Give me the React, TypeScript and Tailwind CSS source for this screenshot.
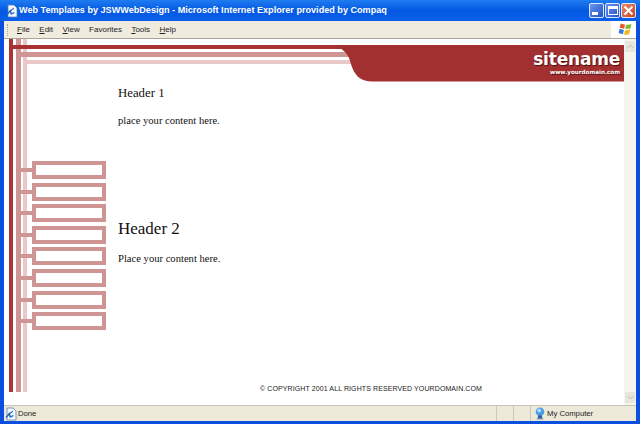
const menus = [
  { key: "F", rest: "ile" },
  { key: "E", rest: "dit" },
  { key: "V", rest: "iew" },
  { key: "", rest: "Favorites" },
  { key: "T", rest: "ools" },
  { key: "H", rest: "elp" },
];

const navItems = [0, 1, 2, 3, 4, 5, 6, 7];

function PageIcon() {
  return (
    <svg width="14" height="14" viewBox="0 0 14 14" className="shrink-0">
      <path d="M3 1h6l3 3v9H3z" fill="#f4f8ff" stroke="#5b7fb5" strokeWidth="0.8" />
      <path d="M9 3.5 4 7l2 4 4-2-1-1-2 1-1-2 3-2z" fill="#2f74c8" />
      <path d="M2 10.5 6 6" stroke="#1f5fb0" strokeWidth="1.2" />
    </svg>
  );
}

function WindowsFlag() {
  return (
    <svg width="15" height="15" viewBox="0 0 14 14">
      <path d="M2.5 1.5 6.6 2.6 5.7 6.4 1.6 5.4z" fill="#e8562a" />
      <path d="M7.6 2.8 12.6 2 11.6 6 6.8 6.6z" fill="#7cb82f" />
      <path d="M1.4 6.4 5.5 7.4 4.6 11.4 0.6 10.2z" fill="#2f7ce0" />
      <path d="M6.6 7.6 11.4 7 10.4 11.6 5.6 12z" fill="#f5b81c" />
    </svg>
  );
}

function ComputerIcon() {
  return (
    <svg width="12" height="15" viewBox="0 0 14 16" className="shrink-0">
      <circle cx="7" cy="6" r="5" fill="#4a9be8" />
      <circle cx="6" cy="4.5" r="2.2" fill="#b4dcfa" />
      <path d="M5 10h4l1 4H4z" fill="#2a5fa8" />
      <path d="M3 14h8v1H3z" fill="#8a97a8" />
    </svg>
  );
}

function WindowButton({ kind }: { kind: "min" | "max" | "close" }) {
  const bg =
    kind === "close"
      ? "bg-gradient-to-br from-[#e88a6c] to-[#c8401c] w-[15px]"
      : "bg-gradient-to-br from-[#6b95ee] to-[#2450c8] w-[15px]";
  return (
    <div className={`h-[15px] rounded-[2px] border border-[#dfe8fb] flex items-center justify-center ${bg}`}>
      {kind === "min" && <div className="w-[6px] h-[3px] bg-white mt-[6px] mr-[3px]" />}
      {kind === "max" && <div className="w-[10px] h-[9px] border border-t-[3px] border-white" />}
      {kind === "close" && (
        <svg width="11" height="11" viewBox="0 0 11 11">
          <path d="M1.5 1.5l8 8M9.5 1.5l-8 8" stroke="white" strokeWidth="2" />
        </svg>
      )}
    </div>
  );
}

// stripes running in from the left and the curved banner edge
function HeaderArt() {
  return (
    <svg width="620" height="43" viewBox="0 0 620 43" className="block">
      <rect x="5" y="0" width="4" height="43" fill="#ab3434" />
      <rect x="12" y="0" width="5" height="43" fill="#cf9494" />
      <rect x="19" y="0" width="4" height="43" fill="#e8c8c8" />
      <rect x="19" y="21" width="335" height="4" fill="#e8c8c8" />
      <rect x="12" y="13" width="335" height="5" fill="#cf9494" />
      <rect x="5" y="6" width="335" height="4" fill="#a83232" />
      <path d="M329 6H620V42.5H368C350 42.5 348 27 345 19C343 14 338 9 329 6Z" fill="#a33030" />
    </svg>
  );
}

function StatusCell({ className }: { className: string }) {
  return <div className={`h-full border-l border-[#cdc9b6] ${className}`} />;
}

export default function App() {
  return (
    <div className="w-[640px] h-[424px] overflow-hidden flex flex-col bg-[#0a4fe0] font-['Liberation_Sans',sans-serif]">
      {/* Title bar */}
      <div className="h-[21px] shrink-0 flex items-center pl-[5px] pr-[4px] bg-gradient-to-b from-[#1f7cf0] via-[#0558e2] to-[#0a60ec]">
        <PageIcon />
        <span className="ml-[0px] text-white text-[9.1px] font-bold whitespace-nowrap font-['Liberation_Sans',sans-serif]">
          Web Templates by JSWWebDesign - Microsoft Internet Explorer provided by Compaq
        </span>
        <div className="ml-auto flex gap-[1px]">
          <WindowButton kind="min" />
          <WindowButton kind="max" />
          <WindowButton kind="close" />
        </div>
      </div>

      <div className="flex-1 min-h-0 mx-[4px] flex flex-col bg-white">
        {/* Menu bar */}
        <div className="h-[18px] shrink-0 flex items-center bg-[#efecdf] border-b border-[#a9a698]">
          <div className="ml-[3px] w-[2px] h-[12px] border-l border-dotted border-[#a9a698]" />
          <div className="flex gap-[9.4px] ml-[8px] text-[8px] text-[#222] font-['Liberation_Sans',sans-serif]">
            {menus.map((m) => (
              <span key={m.rest}>
                {m.key ? <span className="underline">{m.key}</span> : null}
                {m.rest}
              </span>
            ))}
          </div>
          <div className="ml-auto h-full w-[25px] bg-white flex items-center justify-end pr-[3px]">
            <WindowsFlag />
          </div>
        </div>

        <div className="flex-1 min-h-0 flex">
          {/* Page */}
          <div className="w-[620px] flex flex-col bg-white">
            <div className="relative h-[43px] shrink-0">
              <HeaderArt />
              <div className="absolute right-[4px] top-[10px] flex flex-col items-end text-white font-bold font-['DejaVu_Sans',sans-serif] [text-shadow:1px_1px_1px_#4a1010]">
                <span className="text-[17px] leading-[20px] tracking-[-0.2px]">sitename</span>
                <span className="text-[5.6px] leading-[6px]">www.yourdomain.com</span>
              </div>
            </div>

            <div className="flex h-[310px] pl-[5px]">
              <div className="flex gap-[3px] shrink-0">
                <div className="w-[4px] h-full bg-[#ab3434]" />
                <div className="flex gap-[2px]">
                  <div className="w-[5px] h-full bg-[#cf9494]" />
                  <div className="w-[4px] h-full bg-[#e8c8c8]" />
                </div>
              </div>

              <div className="ml-[5px] w-[74px] shrink-0 pt-[79px] flex flex-col gap-[3.6px]">
                {navItems.map((i) => (
                  <div key={i} className="relative h-[18px] border-[4px] border-[#cf9494] bg-white">
                    <div className="absolute right-[70px] top-[3px] w-[12px] h-[4px] bg-[#cf9494]" />
                  </div>
                ))}
              </div>

              <div className="ml-[12px] flex-1 flex flex-col font-['Liberation_Serif',serif] text-[#111]">
                <h1 className="mt-[4px] text-[12.8px] leading-[15px]">Header 1</h1>
                <p className="mt-[14px] text-[10.6px] leading-[12px]">place your content here.</p>
                <h2 className="mt-[92px] text-[17px] leading-[20px]">Header 2</h2>
                <p className="mt-[14px] text-[10.6px] leading-[12px]">Place your content here.</p>
                <div className="mt-auto mb-[-1px] text-center text-[7px] leading-[9px] tracking-[0.1px] text-[#222] font-['Liberation_Sans',sans-serif]">
                  © COPYRIGHT 2001 ALL RIGHTS RESERVED YOURDOMAIN.COM
                </div>
              </div>
            </div>
          </div>

          {/* Scrollbar */}
          <div className="w-[12px] flex flex-col justify-between py-[2px] bg-[#f5f4ef]">
            <div className="h-[11px] mx-[1px] bg-[#e6e6dc] flex items-center justify-center text-[#b9b9ac]">
              <svg width="7" height="5" viewBox="0 0 7 5"><path d="M.5 4 3.5 1l3 3" fill="none" stroke="currentColor" /></svg>
            </div>
            <div className="h-[11px] mx-[1px] bg-[#e6e6dc] flex items-center justify-center text-[#b9b9ac]">
              <svg width="7" height="5" viewBox="0 0 7 5"><path d="M.5 1l3 3 3-3" fill="none" stroke="currentColor" /></svg>
            </div>
          </div>
        </div>

        {/* Status bar */}
        <div className="h-[16px] shrink-0 flex items-center bg-[#ece9d8] border-t border-[#c9c5b2] text-[7.7px] text-[#222]">
          <div className="w-[14px] flex justify-center"><PageIcon /></div>
          <span>Done</span>
          <div className="ml-auto flex h-full items-center">
            <StatusCell className="w-[17px]" />
            <StatusCell className="w-[17px]" />
            <div className="h-full w-[94px] border-l border-[#cdc9b6] flex items-center pl-[3px] gap-[1px]">
              <ComputerIcon />
              <span>My Computer</span>
            </div>
            <div className="h-full w-[12px]" />
          </div>
        </div>
      </div>

      <div className="h-[3px] shrink-0" />
    </div>
  );
}
